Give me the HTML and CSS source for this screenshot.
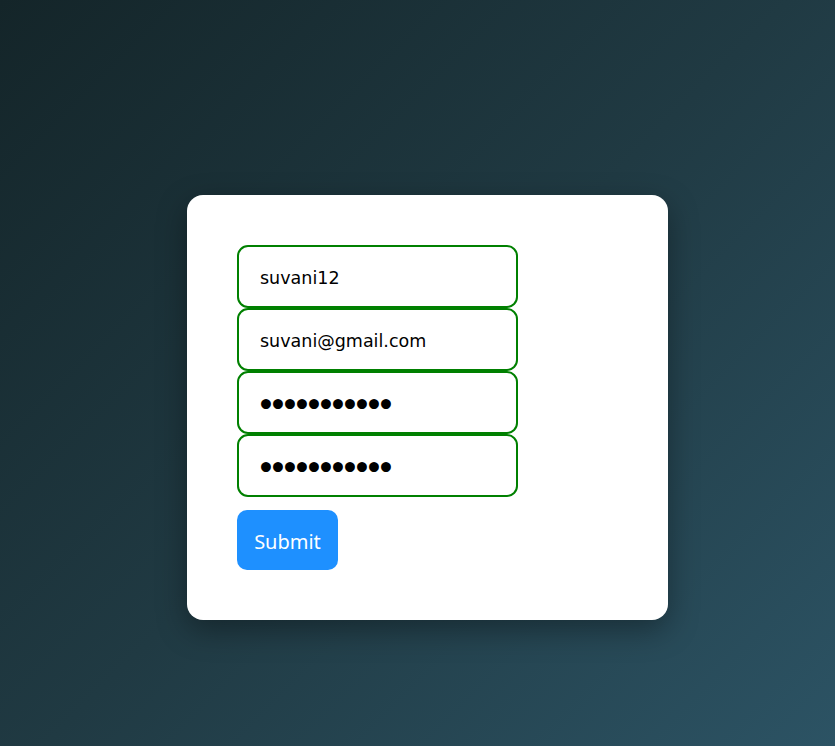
FILE: index.html
```html
<!DOCTYPE html>
<html>
<head>
<meta charset="utf-8">
<link rel="stylesheet" href="styles.css">
</head>
<body>
<div class="page">
  <form class="card">
    <input class="field" type="text" value="suvani12">
    <input class="field" type="text" value="suvani@gmail.com">
    <input class="field secret" type="password" value="suvani12345">
    <input class="field secret" type="password" value="suvani12345">
    <button class="submit" type="button">Submit</button>
  </form>
</div>
</body>
</html>
```
FILE: styles.css
```css
* { box-sizing: border-box; }
html, body { margin: 0; padding: 0; height: 100%; }
body {
  background: linear-gradient(135deg, #142529 0%, #203a43 50%, #2c5364 100%);
}
.page {
  height: 746px;
  display: flex;
  align-items: flex-start;
  justify-content: flex-start;
  padding: 195px 0 0 187px;
}
.card {
  width: 481px;
  height: 425px;
  background: #fff;
  border-radius: 16px;
  padding: 50px;
  display: flex;
  flex-direction: column;
  align-items: flex-start;
  box-shadow: 0 10px 30px rgba(0, 0, 0, 0.35);
}
.field {
  width: 281px;
  height: 63px;
  margin: 0;
  border: 2px solid #008000;
  border-radius: 11px;
  padding: 3px 20px 0 21px;
  font-family: "DejaVu Sans", Verdana, sans-serif;
  font-size: 17.5px;
  color: #000;
  outline: none;
  background: #fff;
}
.secret {
  font-size: 28px;
  font-weight: bold;
  letter-spacing: -5.9px;
  padding: 5px 20px 0 18px;
}
.submit {
  margin-top: 13px;
  width: 101px;
  height: 60px;
  border: none;
  border-radius: 10px;
  background: #1e90ff;
  color: #fff;
  font-family: "Noto Sans", "Open Sans", sans-serif;
  font-size: 20px;
  padding: 2px 0 0;
}
```
